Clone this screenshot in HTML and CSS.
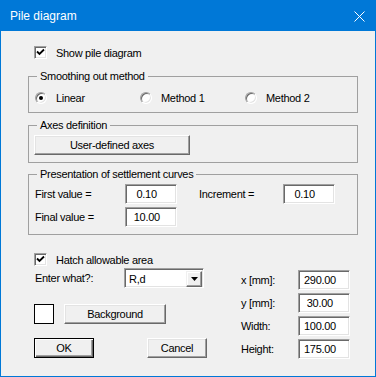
FILE: index.html
```html
<!DOCTYPE html>
<html lang="en">
<head>
    <meta charset="UTF-8">
    <title>Pile diagram</title>
    <link rel="stylesheet" href="styles.css">
</head>
<body>
    <div class="dialog">
        <div class="titlebar">
            <span class="title">Pile diagram</span>
            <svg class="close" width="11" height="11" viewBox="0 0 11 11">
                <path d="M0.5 0.5L10.5 10.5M10.5 0.5L0.5 10.5" stroke="#fff" stroke-width="1" fill="none"/>
            </svg>
        </div>
        <div class="content">
            <!-- Show pile diagram -->
            <label class="check show-row">
                <span class="box"><svg width="9" height="9" viewBox="0 0 9 9"><path d="M1 3.5L3.5 6L8 1.5" stroke="#000" stroke-width="1.8" fill="none"/></svg></span>
                Show pile diagram
            </label>

            <fieldset class="group smoothing">
                <legend>Smoothing out method</legend>
                <div class="radios">
                    <label class="radio"><span class="dot on"></span>Linear</label>
                    <label class="radio"><span class="dot"></span>Method 1</label>
                    <label class="radio"><span class="dot"></span>Method 2</label>
                </div>
            </fieldset>

            <fieldset class="group axes">
                <legend>Axes definition</legend>
                <button class="btn axes-btn">User-defined axes</button>
            </fieldset>

            <fieldset class="group curves">
                <legend>Presentation of settlement curves</legend>
                <div class="curve-row">
                    <span class="curve-label">First value =</span>
                    <input class="field" type="text" value="  0.10">
                    <span class="curve-label inc-label">Increment =</span>
                    <input class="field" type="text" value="  0.10">
                </div>
                <div class="curve-row">
                    <span class="curve-label">Final value =</span>
                    <input class="field" type="text" value=" 10.00">
                </div>
            </fieldset>

            <label class="check hatch-row">
                <span class="box"><svg width="9" height="9" viewBox="0 0 9 9"><path d="M1 3.5L3.5 6L8 1.5" stroke="#000" stroke-width="1.8" fill="none"/></svg></span>
                Hatch allowable area
            </label>

            <div class="bottom">
                <div class="left-col">
                    <div class="what-row">
                        <span class="what-label">Enter what?:</span>
                        <div class="combo">
                            <span class="combo-text">R,d</span>
                            <span class="combo-btn"><svg width="7" height="4" viewBox="0 0 7 4"><path d="M0 0H7L3.5 4Z" fill="#000"/></svg></span>
                        </div>
                    </div>
                    <div class="bg-row">
                        <span class="swatch"></span>
                        <button class="btn bg-btn">Background</button>
                    </div>
                    <div class="ok-row">
                        <button class="btn default ok-btn">OK</button>
                        <button class="btn cancel-btn">Cancel</button>
                    </div>
                </div>
                <div class="right-col">
                    <div class="size-row"><span class="size-label">x [mm]:</span><input class="field" type="text" value="290.00"></div>
                    <div class="size-row"><span class="size-label">y [mm]:</span><input class="field" type="text" value=" 30.00"></div>
                    <div class="size-row"><span class="size-label">Width:</span><input class="field" type="text" value="100.00"></div>
                    <div class="size-row"><span class="size-label">Height:</span><input class="field" type="text" value="175.00"></div>
                </div>
            </div>
        </div>
    </div>
</body>
</html>
```

FILE: styles.css
```css
* {
    box-sizing: border-box;
}
body {
    margin: 0;
    background: #fff;
    font-family: "Liberation Sans", Arial, sans-serif;
    font-size: 11px;
    letter-spacing: -0.3px;
    color: #000;
}
.dialog {
    width: 376px;
    height: 377px;
    border: 1px solid #0078d7;
    background: #f0f0f0;
}
.titlebar {
    height: 30px;
    background: #0078d7;
    color: #fff;
    display: flex;
    align-items: center;
    justify-content: space-between;
    padding: 0 10px 0 9px;
    font-size: 12px;
    letter-spacing: 0;
}
.close {
    display: block;
}
.content {
    display: flex;
    flex-direction: column;
    align-items: flex-start;
    padding: 0 17px 0 27px;
}

/* checkboxes */
.check {
    display: flex;
    align-items: center;
    height: 13px;
    margin-left: 6px;
    gap: 9px;
}
.show-row {
    margin-top: 15px;
}
.hatch-row {
    margin-top: 18px;
}
.box {
    width: 13px;
    height: 13px;
    background: #fff;
    border: 1px solid;
    border-color: #a0a0a0 #fff #fff #a0a0a0;
    box-shadow: inset 1px 1px #696969, inset -1px -1px #e3e3e3;
    display: flex;
    align-items: center;
    justify-content: center;
}
.box svg {
    display: block;
}

/* group boxes */
.group {
    width: 330px;
    margin: 0;
    padding: 0 6px 7px;
    border: 1px solid #a0a0a0;
}
.group legend {
    margin-left: 2px;
    padding: 0 3px;
    line-height: 13px;
}
.smoothing {
    margin-top: 11px;
    padding-bottom: 8px;
}
.axes {
    margin-top: 6px;
}
.curves {
    margin-top: 5px;
}

/* radios */
.radios {
    display: flex;
    margin-top: 8px;
    height: 13px;
}
.radio {
    width: 105px;
    display: flex;
    align-items: center;
    gap: 9px;
}
.dot {
    width: 12px;
    height: 12px;
    border-radius: 50%;
    background: #fff;
    border: 1px solid;
    border-color: #a0a0a0 #fff #fff #a0a0a0;
    box-shadow: inset 1px 1px #696969, inset -1px -1px #e3e3e3;
    display: flex;
    align-items: center;
    justify-content: center;
}
.dot.on::after {
    content: "";
    width: 4px;
    height: 4px;
    border-radius: 50%;
    background: #000;
}

/* buttons */
.btn {
    height: 20px;
    padding: 0;
    background: #f0f0f0;
    border: 1px solid;
    border-color: #fff #696969 #696969 #fff;
    box-shadow: inset -1px -1px #a0a0a0, inset 1px 1px #e3e3e3;
    font: inherit;
    letter-spacing: inherit;
    color: #000;
}
.btn.default {
    border-color: #000;
    box-shadow: inset 1px 1px #fff, inset -1px -1px #696969, inset -2px -2px #a0a0a0;
}
.axes-btn {
    width: 156px;
    margin: 3px 0 0 -1px;
}

/* text fields */
.field {
    width: 52px;
    height: 20px;
    padding: 0 0 0 5px;
    background: #fff;
    border: 1px solid;
    border-color: #a0a0a0 #fff #fff #a0a0a0;
    box-shadow: inset 1px 1px #696969, inset -1px -1px #e3e3e3;
    font: inherit;
    letter-spacing: inherit;
    color: #000;
    outline: none;
}
.curve-row {
    display: flex;
    align-items: center;
    margin-top: 3px;
}
.curve-label {
    width: 90px;
}
.inc-label {
    width: 84px;
    margin-left: 22px;
}

/* bottom area */
.bottom {
    display: flex;
    margin-left: 6px;
}
.left-col {
    width: 207px;
}
.what-row {
    display: flex;
    align-items: center;
    margin-top: 2px;
}
.what-label {
    width: 90px;
    padding-left: 1px;
}
.combo {
    width: 80px;
    height: 20px;
    background: #fff;
    border: 1px solid;
    border-color: #a0a0a0 #fff #fff #a0a0a0;
    box-shadow: inset 1px 1px #696969, inset -1px -1px #e3e3e3;
    display: flex;
    align-items: center;
    justify-content: space-between;
    padding: 2px 1px 1px 4px;
}
.combo-btn {
    width: 16px;
    height: 16px;
    background: #f0f0f0;
    border: 1px solid;
    border-color: #f0f0f0 #696969 #696969 #f0f0f0;
    box-shadow: inset -1px -1px #a0a0a0, inset 1px 1px #fff;
    display: flex;
    align-items: center;
    justify-content: center;
}
.combo-btn svg {
    display: block;
}
.bg-row {
    display: flex;
    align-items: center;
    gap: 10px;
    margin-top: 16px;
}
.swatch {
    width: 20px;
    height: 20px;
    background: #fff;
    border: 1px solid #000;
}
.bg-btn {
    width: 102px;
}
.ok-row {
    display: flex;
    gap: 53px;
    margin-top: 14px;
}
.ok-btn, .cancel-btn {
    width: 60px;
}
.right-col {
    display: flex;
    flex-direction: column;
    gap: 3px;
    margin-top: 4px;
}
.size-row {
    display: flex;
    align-items: center;
}
.size-label {
    width: 57px;
}
```
